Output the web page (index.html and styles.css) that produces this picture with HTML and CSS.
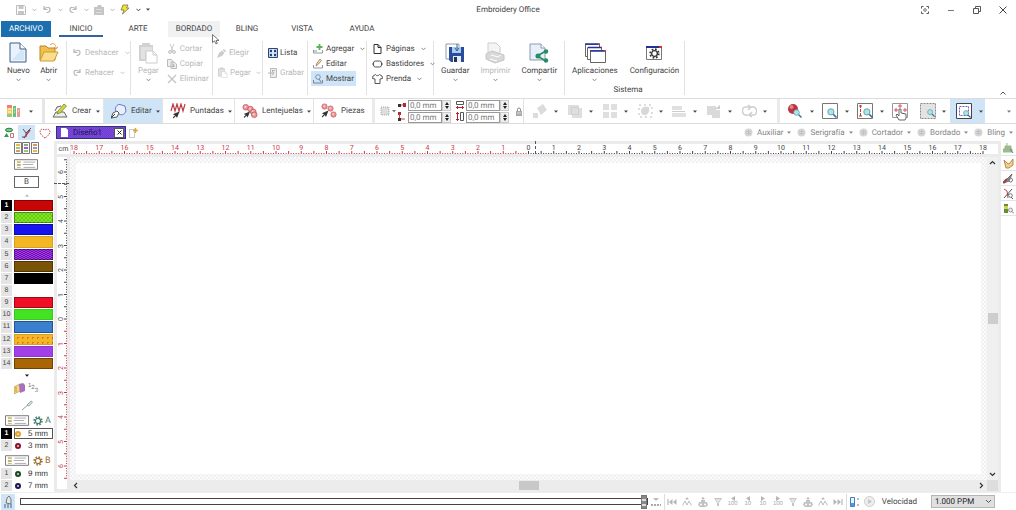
FILE: index.html
```html
<!DOCTYPE html>
<html lang="es">
<head>
<meta charset="utf-8">
<title>Embroidery Office</title>
<link rel="stylesheet" href="styles.css">
</head>
<body>
<svg class="sprite" aria-hidden="true">
  <symbol id="chev" viewBox="0 0 5 4"><path d="M.5 .8 2.5 2.8 4.5 .8" fill="none" stroke="currentColor"/></symbol>
  <symbol id="tri" viewBox="0 0 4 3"><path d="M0 .5H4L2 2.8Z" fill="currentColor"/></symbol>
  <symbol id="undo" viewBox="0 0 10 9"><path d="M2 1v3.500h3.500M2 4.500C4 1.500 8 1.500 8 4.500 8 6.500 6.500 7.500 4.500 7.500" fill="none" stroke="currentColor" stroke-width="1.200"/></symbol>
  <symbol id="redo" viewBox="0 0 10 9"><path d="M8 1v3.500H4.500M8 4.500C6 1.500 2 1.500 2 4.500 2 6.500 3.500 7.500 5.500 7.500" fill="none" stroke="currentColor" stroke-width="1.200"/></symbol>
  <symbol id="clip" viewBox="0 0 20 22"><path d="M1 3h14v16H1zM4 1h8v4H4z" fill="#d2d2d2"/><path d="M3 5v12h4V9h7V5z" fill="#e2e2e2"/><path d="M8 9h7l4 4v8H8z" fill="#fff" stroke="#ccc"/><path d="M15 9v4h4" fill="none" stroke="#ccc"/></symbol>
  <symbol id="lens" viewBox="0 0 9 9"><circle cx="3.500" cy="3.500" r="2.800" fill="#a9e6ea" stroke="#5f9aa4" stroke-width=".8"/><path d="m5.700 5.700 2.800 2.800" stroke="#356e9a" stroke-width="1.400"/></symbol>
  <symbol id="funnel" viewBox="0 0 10 10"><path d="M1 1h8L6 6v3H4V6z" fill="#c4c4c4"/><path d="M3 3h4M4 5h2" stroke="#fff"/></symbol>
  <symbol id="cluster" viewBox="0 0 10 10"><path d="M5 0v3" stroke="#c5c5c5"/><path d="M3 2h4L5 0zM3 3h4v2h2l1 3-2 2H2L0 8l1-3h2z" fill="#c2c2c2"/><circle cx="3" cy="7.500" r="1" fill="#fff"/><circle cx="7" cy="7.500" r="1" fill="#fff"/></symbol>
  <symbol id="loops" viewBox="0 0 10 10"><path d="M5 0 3 2.500h4z" fill="#bbb"/><path d="M.5 8.500 3 4l2 4 2-4 2.500 4.500" fill="none" stroke="#bbb"/></symbol>
  <symbol id="prev" viewBox="0 0 6 5"><path d="M5 0v5L1 2.500Z" fill="#b5b5b5"/></symbol>
  <symbol id="next" viewBox="0 0 6 5"><path d="M1 0v5L5 2.500Z" fill="#b5b5b5"/></symbol>
  <symbol id="card" viewBox="0 0 26 12"><path d="M.5.5h24v10H.5z" fill="#fff" stroke="#777"/><path d="M3 3h4" stroke="#e8b46a" stroke-width="2"/><path d="M3 6h4" stroke="#8fc48b" stroke-width="2"/><path d="M3 8.500h4" stroke="#e0a65c"/><path d="M10 3h12M9 5.500h11M10 8.500h12" stroke="#aaa"/></symbol>
  <symbol id="gear" viewBox="0 0 10 10"><circle cx="5" cy="5" r="2.600" fill="none" stroke="currentColor" stroke-width="1.200"/><circle cx="5" cy="5" r="3.900" fill="none" stroke="currentColor" stroke-width="1.600" stroke-dasharray="1.560 1.500"/></symbol>
  <symbol id="disk" viewBox="0 0 10 10"><path d="M.5.5h8l1 1v8h-9z" fill="#fff" stroke="#bcbcbc"/><path d="M2.500 1h5v3h-5zM2 6h6v3H2z" fill="#c6c6c6"/></symbol>
  <symbol id="ball" viewBox="0 0 9 9"><circle cx="4.500" cy="4.500" r="4" fill="#d6d6d6"/><path d="M2 3.500h5M2 5.500h5M4.500 2v5" stroke="#bbb" stroke-width=".7"/></symbol>
  <symbol id="bead" viewBox="0 0 8 8"><circle cx="4" cy="4" r="3" fill="#e99a9f" stroke="#c8525b" stroke-width=".8"/><circle cx="3.500" cy="3.500" r="1" fill="#f8d6d6"/></symbol>
  <symbol id="arrow" viewBox="0 0 8 8"><path d="M7.500.5 5 7 3.800 5 1.500 7.500.8 6.500 3 4.300.8 3.200Z" fill="#333"/></symbol>
</svg>

<header class="titlebar">
  <div class="quick">
    <button aria-label="Guardar"><svg width="10" height="10"><use href="#disk"/></svg></button><svg class="chev" width="5" height="4"><use href="#chev"/></svg>
    <button aria-label="Deshacer"><svg width="10" height="9"><use href="#undo"/></svg></button><svg class="chev" width="5" height="4"><use href="#chev"/></svg>
    <button aria-label="Rehacer"><svg width="10" height="9"><use href="#redo"/></svg></button><svg class="chev" width="5" height="4"><use href="#chev"/></svg>
    <button aria-label="Imagen"><svg width="10" height="10" viewBox="0 0 10 10"><path d="M0 2h3l1-2h3l1 2h2v8H0z" fill="#c5c5c5"/><path d="M2 4h6v4H2z" fill="#ddd"/><path d="M2 6h6" stroke="#aaa"/></svg></button><svg class="chev" width="5" height="4"><use href="#chev"/></svg>
    <button aria-label="Rápido"><svg width="10" height="11" viewBox="0 0 10 11"><path d="M3 1h5L6.500 4H9L2.500 10 4 6H1z" fill="#f4e23c" stroke="#7c7440" stroke-width=".8"/></svg></button><svg class="chev dark" width="5" height="4"><use href="#chev"/></svg>
    <svg class="dark" width="4" height="3"><use href="#tri"/></svg>
  </div>
  <h1>Embroidery Office</h1>
  <div class="window">
    <button aria-label="Enfocar"><svg width="8" height="8" viewBox="0 0 8 8"><path d="M.5 2.500v-2h2M5.500.5h2v2M7.500 5.500v2h-2M2.500 7.500h-2v-2" fill="none" stroke="#555"/><circle cx="4" cy="4" r="1.300" fill="none" stroke="#555" stroke-width=".8"/></svg></button>
    <button aria-label="Minimizar"><svg width="8" height="8" viewBox="0 0 8 8"><path d="M1 4.500h6" stroke="#777"/></svg></button>
    <button aria-label="Restaurar"><svg width="8" height="8" viewBox="0 0 8 8"><path d="M.5 2.500h5v5h-5zM2.500 2V.5h5v5H6" fill="none" stroke="#555"/></svg></button>
    <button aria-label="Cerrar"><svg width="8" height="8" viewBox="0 0 8 8"><path d="m.5.5 7 7M7.500.5l-7 7" stroke="#444"/></svg></button>
  </div>
</header>

<nav class="tabs">
  <button class="file">ARCHIVO</button>
  <button class="tab on">INICIO</button>
  <button class="tab arte">ARTE</button>
  <button class="tab hover">BORDADO<svg class="pointer" width="8" height="11" viewBox="0 0 8 11"><path d="M.5.5v8l2-1.600 1.400 3 1.400-.6-1.300-2.900H7z" fill="#fff" stroke="#555" stroke-width=".8"/></svg></button>
  <button class="tab bling">BLING</button>
  <button class="tab vista">VISTA</button>
  <button class="tab">AYUDA</button>
</nav>

<section class="ribbon">
  <div class="group g1">
    <button class="big"><svg width="20" height="22" viewBox="0 0 20 22"><path d="M2 1h10l6 6v13H2z" fill="#eaf3fd" stroke="#3d5f86"/><path d="M12 1v6h6" fill="#fff" stroke="#3d5f86"/><path d="M4 18 13 8l3 1v9z" fill="#d3e6f8"/></svg>Nuevo<svg width="5" height="4"><use href="#chev"/></svg></button>
    <button class="big"><svg width="20" height="22" viewBox="0 0 20 22"><path d="M1 4h6l2 2h7v12H1z" fill="#f0c04b" stroke="#b8872c"/><path d="m1 19 4-9h14l-4 9z" fill="#fbdd8b" stroke="#d19b38"/><path d="M11 3c3-3 6-1 6 3m-2-1 2 2 2-2" fill="none" stroke="#dba23b"/></svg>Abrir<svg width="5" height="4"><use href="#chev"/></svg></button>
  </div>
  <div class="group two off">
    <button class="row"><svg width="10" height="9"><use href="#undo"/></svg>Deshacer<svg class="end" width="5" height="4"><use href="#chev"/></svg></button>
    <button class="row"><svg width="10" height="9"><use href="#redo"/></svg>Rehacer<svg class="end" width="5" height="4"><use href="#chev"/></svg></button>
  </div>
  <div class="group paste off">
    <button class="big"><svg width="20" height="22"><use href="#clip"/></svg>Pegar<svg width="5" height="4"><use href="#chev"/></svg></button>
    <div class="stack">
      <button class="row"><svg width="10" height="10" viewBox="0 0 10 10"><path d="m3 0 3 7M7 0 4 7" stroke="#ccc"/><circle cx="3" cy="8" r="1.400" fill="none" stroke="#bbb"/><circle cx="7" cy="8" r="1.400" fill="none" stroke="#bbb"/></svg>Cortar</button>
      <button class="row"><svg width="10" height="10" viewBox="0 0 10 10"><path d="M.5.500h4l1.500 2v5H.500zM4 3h3l2.500 2v4.500H4z" fill="#eee" stroke="#bbb"/><path d="M5.500 6h2M5.500 7.500h2" stroke="#aaa"/></svg>Copiar</button>
      <button class="row"><svg width="10" height="10" viewBox="0 0 10 10"><path d="m1 1 8 8M9 1 1 9" stroke="#c4c4c4" stroke-width="1.300"/></svg>Eliminar</button>
    </div>
  </div>
  <div class="group two narrow off">
    <button class="row"><svg width="10" height="10" viewBox="0 0 10 10"><path d="m0 10 2-5 5-4 2 2-4 5z" fill="#ccc"/><path d="m5 2 3 3" stroke="#fff"/></svg>Elegir</button>
    <button class="row"><svg width="11" height="11"><use href="#clip"/></svg>Pegar<svg class="end" width="5" height="4"><use href="#chev"/></svg></button>
  </div>
  <div class="group two list">
    <button class="row"><svg width="10" height="10" viewBox="0 0 10 10"><path d="M.5.5h9v9h-9z" fill="#b9d0ec" stroke="#33466b"/><path d="M2 2h2v2H2zM6 2h2v2H6zM2 6h2v2H2zM6 6h2v2H6z" fill="#23407c"/><path d="M5 1v8" stroke="#fff"/></svg>Lista</button>
    <button class="row off"><svg width="10" height="10" viewBox="0 0 10 10"><path d="M2.500.5h6v9h-6z" fill="#eee" stroke="#bbb"/><path d="M0 5h6M4 3l2 2-2 2M4 2.500h3" fill="none" stroke="#b5b5b5"/></svg>Grabar</button>
  </div>
  <div class="group three">
    <button class="row"><svg width="10" height="10" viewBox="0 0 10 10"><path d="M.5 6v3h9V6M1 7h3" fill="none" stroke="#8f9aa6"/><path d="M6.500 0v6M3.500 3h6" stroke="#58b455" stroke-width="1.800"/></svg>Agregar<svg class="end" width="5" height="4"><use href="#chev"/></svg></button>
    <button class="row"><svg width="10" height="10" viewBox="0 0 10 10"><path d="M.5 6v3h9V6" fill="none" stroke="#8f9aa6"/><path d="m3 7 1-3 3-4 1.500 1.500L5.500 5z" fill="#f1ddb0" stroke="#9b7450" stroke-width=".8"/></svg>Editar</button>
    <button class="row sel"><svg width="10" height="10" viewBox="0 0 10 10"><path d="M.5 6v3h9V6" fill="none" stroke="#71869c"/><circle cx="5" cy="3" r="2.300" fill="#cfe8fb" stroke="#6b7b94" stroke-width=".8"/><path d="m6 5 2 3" stroke="#6b7b94"/></svg>Mostrar</button>
  </div>
  <div class="group three pages">
    <button class="row"><svg width="11" height="10" viewBox="0 0 11 10"><path d="M2 .5h4l3 3v6H2zM6 .5v3h3" fill="#fff" stroke="#333"/></svg>Páginas<svg class="end" width="5" height="4"><use href="#chev"/></svg></button>
    <button class="row"><svg width="11" height="10" viewBox="0 0 11 10"><rect x="1.500" y="2" width="8" height="6" rx="2" fill="#fff" stroke="#555"/><path d="M0 5h2M9 5h2" stroke="#555"/></svg>Bastidores<svg class="end" width="5" height="4"><use href="#chev"/></svg></button>
    <button class="row"><svg width="11" height="10" viewBox="0 0 11 10"><path d="M3.500.500 1 2l-.5 2.500L3 5v4.500h5V5l2.500-.5L10 2 7.500.500C7 2 4 2 3.500.500z" fill="#fff" stroke="#555"/></svg>Prenda<svg class="end" width="5" height="4"><use href="#chev"/></svg></button>
  </div>
  <div class="group share">
    <button class="big"><svg width="20" height="22" viewBox="0 0 20 22"><path d="M1 2h13v15H1z" fill="#fff" stroke="#8d9cb0"/><path d="M4 5h15v15H6l-2-2z" fill="#294c9c"/><path d="M7 5h9v6H7z" fill="#a9cdf0"/><path d="M8 14h8v6H8z" fill="#e8eef6"/><path d="M9 15h3v5H9z" fill="#20325f"/><path d="M12 2v6M10 6l2 3 2-3" fill="none" stroke="#39639c"/></svg>Guardar<svg width="5" height="4"><use href="#chev"/></svg></button>
    <button class="big off"><svg width="20" height="22" viewBox="0 0 20 22"><path d="M3 1h8l4 4v8H3z" fill="#f4f4f4" stroke="#ccc"/><path d="m1 12 6-3 12 4v5l-9 3-9-4z" fill="#d8d8d8" stroke="#c4c4c4"/><path d="m6 13 7 2 3-2M5 17l7 2" fill="none" stroke="#fff"/></svg>Imprimir<svg width="5" height="4"><use href="#chev"/></svg></button>
    <button class="big"><svg width="20" height="22" viewBox="0 0 20 22"><path d="M1 2h11l4 4v12H1z" fill="#e6effa" stroke="#8b9aad"/><path d="M12 2v4h4" fill="#fff" stroke="#8b9aad"/><path d="M17 9 8 14l9 5" fill="none" stroke="#278c61" stroke-width="1.600"/><circle cx="17" cy="9.500" r="2.200" fill="#278c61"/><circle cx="9" cy="14" r="2.500" fill="#278c61"/><circle cx="17" cy="18.500" r="2.200" fill="#278c61"/></svg>Compartir<svg width="5" height="4"><use href="#chev"/></svg></button>
  </div>
  <div class="group system">
    <div class="pair">
      <button class="big"><svg width="22" height="22" viewBox="0 0 22 22"><g fill="#fff" stroke="#666"><path d="M1.500 2.500h14v12h-14z"/><path d="M3.500 5.500h14v12h-14z"/><path d="M6.500 8.500h15v12h-15z"/></g><path d="M1 2h13M4 5.500h13M6 9h14" stroke="#23309c" stroke-width="1.700"/><path d="M14 2h2M17 5.500h1M20 9h2" stroke="#b33" stroke-width="1.700"/></svg>Aplicaciones<svg width="5" height="4"><use href="#chev"/></svg></button>
      <button class="big"><svg width="20" height="22" viewBox="0 0 20 22"><path d="M2.500 4.500h15v13h-15z" fill="#fff" stroke="#777"/><path d="M2 5h13" stroke="#23309c" stroke-width="2"/><path d="M15 5h3" stroke="#c33" stroke-width="2"/><g color="#333"><use href="#gear" x="5" y="6" width="11" height="11"/></g></svg>Configuración</button>
    </div>
    <p>Sistema</p>
  </div>
  <button class="fold" aria-label="Contraer cinta"><svg width="6" height="4" viewBox="0 0 6 4"><path d="m.5 3.500 2.500-2.500 2.500 2.500" fill="none" stroke="#555"/></svg></button>
</section>

<section class="tools">
  <button class="mode pal" aria-label="Paleta"><svg width="14" height="14" viewBox="0 0 14 14"><path d="M0 1h5v12H0z" fill="#f6c65b"/><path d="M0 1h5v3H0z" fill="#ee7f72"/><path d="M0 10h5v3H0z" fill="#8fc985"/><path d="M6 2h3v11H6z" fill="#6ac173"/><path d="M10 4h3v9h-3z" fill="#e99b93"/><path d="M1 5h3M1 8h3M7 5h1M7 8h1M11 7h1" stroke="#fff"/></svg><svg width="4" height="3"><use href="#tri"/></svg></button>
  <button class="mode crear"><svg width="16" height="16" viewBox="0 0 16 16"><path d="M3 8 5 4l4-1M1 14l3-5h8l3 5z" fill="#e9f1e2" stroke="#666"/><path d="m5 11 1-3 6-7 2.500 2L8 10z" fill="#cbd944" stroke="#807d32" stroke-width=".8"/></svg><span>Crear</span><svg width="4" height="3"><use href="#tri"/></svg></button>
  <button class="mode editar"><svg width="16" height="16" viewBox="0 0 16 16"><path d="M5 9C3 5 6 1 9 1.500l5 1.500 1 5c-1 3-4 5-7 3" fill="#e8effc" stroke="#6b7cc4"/><path d="m0 15 2-5 4-2 2 2-2 4z" fill="#fff" stroke="#555"/><path d="m0 15 4-4" stroke="#333"/></svg><span>Editar</span><svg width="4" height="3"><use href="#tri"/></svg></button>
  <button class="mode punt"><svg width="16" height="16" viewBox="0 0 16 16"><path d="m1 8 2-7 2 7 2-7 2 7 2-7 2 7 2-7" fill="none" stroke="#c13b47" stroke-width="1.200"/><use href="#arrow" x="2" y="8" width="8" height="8"/></svg><span>Puntadas</span><svg width="4" height="3"><use href="#tri"/></svg></button>
  <button class="mode lent"><svg width="16" height="16" viewBox="0 0 17 16"><use href="#bead" x="0" y="0" width="8" height="8"/><use href="#bead" x="5" y="2" width="8" height="8"/><use href="#bead" x="8" y="5" width="8" height="8"/><use href="#bead" x="9" y="8" width="8" height="8"/><use href="#arrow" x="1" y="8" width="8" height="8"/></svg><span>Lentejuelas</span><svg width="4" height="3"><use href="#tri"/></svg></button>
  <button class="mode piez"><svg width="16" height="16" viewBox="0 0 16 16"><use href="#bead" x="0" y="0" width="7" height="7"/><use href="#bead" x="6" y="2" width="7" height="7"/><use href="#bead" x="9" y="8" width="7" height="7"/><use href="#arrow" x="0" y="7" width="8" height="8"/></svg><span>Piezas</span></button>
  <div class="coords">
    <svg class="anchor" width="16" height="12" viewBox="0 0 16 12"><path d="M1 2h8v8H1z" fill="#ddd" stroke="#aaa" stroke-dasharray="1 1"/><path d="M12 5h4l-2 2.500z" fill="#777"/></svg>
    <svg width="8" height="22" viewBox="0 0 8 22"><path d="M1 5h6" stroke="#c44"/><path d="M0 4h3v3H0z" fill="#333"/><path d="M5 3h3v4H5zM0 12h3v3H0z" fill="#b02832"/><path d="M1.500 14v5M2 19h5" stroke="#c44"/><path d="M0 18h3v3H0z" fill="#333"/></svg>
    <div class="fields">
      <div class="num"><input aria-label="Posición X" value="0,0 mm"><span><i></i><i></i></span></div>
      <div class="num"><input aria-label="Posición Y" value="0,0 mm"><span><i></i><i></i></span></div>
    </div>
    <svg class="size" width="8" height="22" viewBox="0 0 8 22"><path d="M.5 1.500h7v3h-7z" fill="#fff" stroke="#555"/><path d="M0 7.500h8M2 6 .5 7.500 2 9M6 6l1.500 1.500L6 9" fill="none" stroke="#b02832"/><path d="M4.500 12.500h3v8h-3z" fill="#fff" stroke="#555"/><path d="M1.500 12v9M0 14l1.500-1.500L3 14M0 19l1.500 1.500L3 19" fill="none" stroke="#b02832"/></svg>
    <div class="fields">
      <div class="num"><input aria-label="Ancho" value="0,0 mm"><span><i></i><i></i></span></div>
      <div class="num"><input aria-label="Alto" value="0,0 mm"><span><i></i><i></i></span></div>
    </div>
    <svg class="lock" width="6" height="9" viewBox="0 0 6 9"><path d="M1.500 4V2.500a1.500 1.500 0 0 1 3 0V4" fill="none" stroke="#888"/><path d="M0 4h6v5H0z" fill="#aaa"/><path d="M1 6h4" stroke="#ddd"/></svg>
  </div>
  <div class="ghost">
    <button aria-label="Girar"><svg width="15" height="14" viewBox="0 0 15 14"><path d="m4 4 6-4 4 6-6 5zM0 9h5v5H0z" fill="#dcdcdc"/></svg><svg width="4" height="3"><use href="#tri"/></svg></button>
    <button aria-label="Orden"><svg width="15" height="14" viewBox="0 0 15 14"><path d="M0 1h11v10H0zM4 4h10v10H4z" fill="#dedede"/><path d="M3.500 3.500h7v7h-7z" fill="none" stroke="#c5c5c5" stroke-dasharray="1 1"/></svg><svg width="4" height="3"><use href="#tri"/></svg></button>
    <button aria-label="Matriz"><svg width="15" height="14" viewBox="0 0 15 14"><path d="M0 0h6v6H0zM8 0h6v6H8zM0 8h6v6H0zM8 8h6v6H8z" fill="#dfdfdf"/></svg><svg width="4" height="3"><use href="#tri"/></svg></button>
    <button aria-label="Escalar"><svg width="15" height="14" viewBox="0 0 15 14"><path d="M3 7c0-4 4-5 8-4 1 4-1 9-5 8-2 0-3-2-3-4z" fill="#d8d8d8"/><path d="M1 1h13v12H1z" fill="none" stroke="#bbb" stroke-dasharray="2 3"/></svg><svg width="4" height="3"><use href="#tri"/></svg></button>
    <button aria-label="Alinear"><svg width="15" height="14" viewBox="0 0 15 14"><path d="M0 2h10v4H0zM0 9h14v4H0z" fill="#e0e0e0"/><path d="M0 7.500h13" stroke="#ccc"/></svg><svg width="4" height="3"><use href="#tri"/></svg></button>
    <button aria-label="Combinar"><svg width="15" height="14" viewBox="0 0 15 14"><path d="M0 2h9v9H0zM5 6h8v8H5z" fill="#dadada"/><path d="m8 5 5-4v4z" fill="#ccc"/></svg><svg width="4" height="3"><use href="#tri"/></svg></button>
    <button aria-label="Ciclo"><svg width="15" height="14" viewBox="0 0 15 14"><path d="M6 11C-1 13-1 2 4 3h4M6 1l3 2-3 3M9 3c7-2 7 9 2 8H8m2-3-3 3 3 2" fill="none" stroke="#cfcfcf" stroke-width="1.500"/></svg><svg width="4" height="3"><use href="#tri"/></svg></button>
  </div>
  <div class="views">
    <button aria-label="Zoom"><svg width="16" height="16" viewBox="0 0 16 16"><circle cx="6" cy="6" r="5" fill="#bd3440"/><circle cx="4.500" cy="4" r="2" fill="#df8588"/><use href="#lens" x="6" y="6" width="9" height="9"/></svg><svg width="4" height="3"><use href="#tri"/></svg></button>
    <button aria-label="Zoom al diseño"><svg width="16" height="16" viewBox="0 0 16 16"><path d="M.5.5h15v15H.5z" fill="#fff" stroke="#777"/><use href="#lens" x="5" y="5" width="10" height="10"/></svg><svg width="4" height="3"><use href="#tri"/></svg></button>
    <button aria-label="Zoom de altura"><svg width="16" height="16" viewBox="0 0 16 16"><path d="M.5.5h15v15H.5z" fill="#fff" stroke="#777"/><path d="M3.500 2v12M2 3h3M2 13h3" stroke="#c33" stroke-dasharray="3 1"/><use href="#lens" x="6" y="5" width="10" height="10"/></svg><svg width="4" height="3"><use href="#tri"/></svg></button>
    <button class="plain" aria-label="Desplazar"><svg width="16" height="20" viewBox="0 0 16 20"><path d="M.5 2.500h15v14H.5z" fill="#fff" stroke="#999"/><path d="M4 7v4M2 9h4M8 3v4M6 5h4M13 7v4M11 9h4" stroke="#d05560"/><path d="M7 19 4 14l1-1 2 2V8h2v4l5 1v4l-1 2z" fill="#fff" stroke="#555" stroke-width=".9"/></svg></button>
    <button class="short" aria-label="Zoom a página"><svg width="16" height="16" viewBox="0 0 16 16"><path d="M.5.5h15v15H.5z" fill="#e3e3e3" stroke="#888" stroke-dasharray="2 1"/><use href="#lens" x="7" y="6" width="8" height="8"/></svg><svg width="4" height="3"><use href="#tri"/></svg></button>
    <button class="sel" aria-label="Zoom a bastidor"><svg width="16" height="16" viewBox="0 0 16 16"><path d="M.5.5h15v15H.5z" fill="#fff" stroke="#444"/><path d="M3.500 3.500h9v9h-9z" fill="none" stroke="#6b5fd0" stroke-dasharray="2 1"/><use href="#lens" x="7" y="7" width="8" height="8"/></svg><svg width="4" height="3"><use href="#tri"/></svg></button>
  </div>
  <svg class="more" width="4" height="3"><use href="#tri"/></svg>
</section>

<section class="docs">
  <div class="panels">
    <button aria-label="Objetos"><svg width="12" height="12" viewBox="0 0 12 12"><ellipse cx="6" cy="3" rx="3.500" ry="1.800" fill="#79c98b" stroke="#218244"/><path d="m1 10 2.500-4L6 10z" fill="#2a9b5b"/><path d="M7.500 6.500h3v4h-3z" fill="#fff" stroke="#c9707a"/></svg></button>
    <button class="sel" aria-label="Hilos"><svg width="12" height="12" viewBox="0 0 12 12"><path d="m2 2 3 4v4M5 6l5-5M1 10h2" fill="none" stroke="#555"/><path d="m3 11 6-8" stroke="#a83c46" stroke-width="1.300"/></svg></button>
    <button aria-label="Favoritos"><svg width="12" height="12" viewBox="0 0 12 12"><path d="M6 11C-2 6 1 0 6 3c5-3 8 3 0 8z" fill="#fff" stroke="#b8444e" stroke-dasharray="1.500 1"/></svg></button>
  </div>
  <div class="doc"><svg width="7" height="9" viewBox="0 0 7 9"><path d="M0 0h5l2 2v7H0z" fill="#fff"/></svg><span>Diseño1</span><button aria-label="Cerrar diseño"><svg width="5" height="5" viewBox="0 0 5 5"><path d="m.5.5 4 4M4.500.5l-4 4" stroke="#222"/></svg></button></div>
  <button class="newdoc" aria-label="Nuevo diseño"><svg width="9" height="10" viewBox="0 0 9 10"><path d="M.5 1.500h5v8h-5z" fill="#fff" stroke="#999" stroke-dasharray="1 1"/><path d="M6.500 0v5M4 2.500h5" stroke="#dca83c" stroke-width="1.500"/></svg></button>
  <div class="machines">
    <button><svg width="9" height="9"><use href="#ball"/></svg>Auxiliar<svg width="4" height="3"><use href="#tri"/></svg></button>
    <button><svg width="9" height="9"><use href="#ball"/></svg>Serigrafía<svg width="4" height="3"><use href="#tri"/></svg></button>
    <button><svg width="9" height="9"><use href="#ball"/></svg>Cortador<svg width="4" height="3"><use href="#tri"/></svg></button>
    <button><svg width="9" height="9"><use href="#ball"/></svg>Bordado<svg width="4" height="3"><use href="#tri"/></svg></button>
    <button><svg width="9" height="9"><use href="#ball"/></svg>Bling<svg width="4" height="3"><use href="#tri"/></svg></button>
  </div>
</section>

<main class="work">
  <aside class="threads">
    <button class="box" aria-label="Paletas"><svg width="25" height="12" viewBox="0 0 25 12"><g fill="#fff" stroke="#777"><path d="M.5.5h7v11h-7zM8.500.5h7v11h-7zM17.500.5h7v11h-7z"/></g><path d="M2 3h4M19 9h4" stroke="#f0b34f" stroke-width="2"/><path d="M2 6h4M10 9h4" stroke="#98ca72" stroke-width="2"/><path d="M2 9h4M19 3h4" stroke="#d09a6c" stroke-width="2"/><path d="M10 3h4M19 6h4" stroke="#9ba08c" stroke-width="2"/><path d="M10 6h4" stroke="#9a5cdb" stroke-width="2"/></svg></button>
    <button class="box" aria-label="Tarjeta"><svg width="25" height="12"><use href="#card"/></svg></button>
    <button class="box letter">B</button>
    <svg class="up" width="4" height="3" viewBox="0 0 4 3"><path d="M0 2.500h4L2 .5z" fill="#aaa"/></svg>
    <ol class="swatches">
      <li class="cur"><b>1</b><button class="c1" aria-label="Rojo"></button></li>
      <li><b>2</b><button class="c2" aria-label="Verde moteado"></button></li>
      <li><b>3</b><button class="c3" aria-label="Azul"></button></li>
      <li><b>4</b><button class="c4" aria-label="Amarillo"></button></li>
      <li><b>5</b><button class="c5" aria-label="Morado"></button></li>
      <li><b>6</b><button class="c6" aria-label="Marrón"></button></li>
      <li><b>7</b><button class="c7" aria-label="Negro"></button></li>
      <li><b>8</b><button class="c8" aria-label="Blanco"></button></li>
      <li><b>9</b><button class="c9" aria-label="Carmesí"></button></li>
      <li><b>10</b><button class="c10" aria-label="Verde"></button></li>
      <li><b>11</b><button class="c11" aria-label="Celeste"></button></li>
      <li><b>12</b><button class="c12" aria-label="Ámbar"></button></li>
      <li><b>13</b><button class="c13" aria-label="Violeta"></button></li>
      <li><b>14</b><button class="c14" aria-label="Ocre"></button></li>
    </ol>
    <svg class="down" width="4" height="3"><use href="#tri"/></svg>
    <button class="spool"><svg width="11" height="11" viewBox="0 0 11 11"><path d="m0 4 6-3v7l-6 3z" fill="#efdf79" stroke="#b79b52" stroke-width=".8"/><path d="m5 1 4-1 2 2v6l-5 2z" fill="#ab6fc0"/><path d="M2 4v5" stroke="#e57a4f"/></svg><span class="n1">1</span><span class="n2">2</span><span class="n3">3</span></button>
    <button class="needle" aria-label="Aguja"><svg width="12" height="11" viewBox="0 0 12 11"><path d="m1 10 7-6" stroke="#999"/><path d="m6 5 4-4 1.500 1L8 6z" fill="#d5e5dd" stroke="#8a9a94" stroke-width=".8"/></svg></button>
    <div class="head a"><svg width="25" height="12"><use href="#card"/></svg><svg width="10" height="10"><use href="#gear"/></svg><span>A</span></div>
    <ol class="beads">
      <li class="cur"><b>1</b><span><i class="gold"></i>5 mm</span></li>
      <li><b>2</b><span><i class="red"></i>3 mm</span></li>
    </ol>
    <div class="head b"><svg width="25" height="12"><use href="#card"/></svg><svg width="10" height="10"><use href="#gear"/></svg><span>B</span></div>
    <ol class="beads">
      <li><b>1</b><span><i class="green"></i>9 mm</span></li>
      <li><b>2</b><span><i class="navy"></i>7 mm</span></li>
    </ol>
  </aside>

  <div class="stage">
    <div class="unit">cm</div>
    <div class="hruler" id="hruler"><svg class="ticks"></svg><div class="labels"></div><i class="mark"></i></div>
    <div class="vruler" id="vruler"><svg class="ticks"></svg><div class="labels"></div><i class="mark"></i></div>
    <div class="canvas"><div class="page"></div></div>
    <div class="vscroll">
      <svg width="7" height="5" viewBox="0 0 7 5"><path d="m1 4 2.500-2.500L6 4" fill="none" stroke="#333" stroke-width="1.200"/></svg>
      <span></span>
      <svg width="7" height="5" viewBox="0 0 7 5"><path d="m1 1 2.500 2.500L6 1" fill="none" stroke="#333" stroke-width="1.200"/></svg>
    </div>
    <div class="hscroll">
      <svg width="5" height="7" viewBox="0 0 5 7"><path d="M4 1 1.500 3.500 4 6" fill="none" stroke="#333" stroke-width="1.200"/></svg>
      <span></span>
      <svg width="5" height="7" viewBox="0 0 5 7"><path d="m1 1 2.500 2.500L1 6" fill="none" stroke="#333" stroke-width="1.200"/></svg>
    </div>
    <div class="corner"></div>
  </div>

  <aside class="side">
    <button aria-label="Ver objetos"><svg width="11" height="11" viewBox="0 0 11 11"><path d="M0 6h9v3H0zM2 3h6v3H2zM4 0v4" fill="#9dbb93" stroke="#9bb98f"/><path d="m7 6 3 4" stroke="#777"/></svg></button>
    <button aria-label="Ver formas"><svg width="11" height="11" viewBox="0 0 11 11"><path d="m1 2 3 3 2 1 4-5v6L6 10H3z" fill="#f1cf8a" stroke="#bb8947"/></svg></button>
    <button aria-label="Ver pincel"><svg width="11" height="11" viewBox="0 0 11 11"><path d="m1 10 3-4 5-5-3 7z" fill="#999" stroke="#555" stroke-width=".8"/><path d="m0 10 4-4" stroke="#a23c58" stroke-width="2"/><circle cx="7.500" cy="7" r="2" fill="none" stroke="#777"/></svg></button>
    <button aria-label="Ver puntadas"><svg width="11" height="11" viewBox="0 0 11 11"><path d="m1 1 3 2 1 7" fill="none" stroke="#c8404e"/><path d="M1 10 9 1M5 6l5 5" stroke="#555"/><circle cx="7.500" cy="7.500" r="1.800" fill="#fff" stroke="#777"/></svg></button>
    <button aria-label="Ver hilos"><svg width="11" height="11" viewBox="0 0 11 11"><path d="M1 1h4v9H1z" fill="#5f8f3c"/><path d="M1 3h4v3H1z" fill="#d6d14b"/><circle cx="7.500" cy="7" r="2" fill="#e8eeee" stroke="#999"/><path d="m9 8.500 2 2" stroke="#777"/></svg></button>
  </aside>
</main>

<footer class="player">
  <button class="sel" aria-label="Dibujar"><svg width="11" height="13" viewBox="0 0 11 13"><path d="m3 8 1-5 2-2 2 3v5z" fill="#e4e7ea" stroke="#777"/><path d="M1 10h9M1 12h9" stroke="#3c6682" stroke-dasharray="2 1"/></svg></button>
  <input class="seek" type="range" min="0" max="100" value="100" aria-label="Progreso">
  <button class="fit" aria-label="Ajustar"><svg width="10" height="10" viewBox="0 0 10 10"><path d="M2 1h6L5 4z" fill="#bbb"/><path d="M0 8h10" stroke="#aaa" stroke-width="2" stroke-dasharray="2 1"/></svg></button>
  <div class="steps">
    <button aria-label="Inicio"><svg width="10" height="8" viewBox="0 0 10 8"><path d="M1 1v6" stroke="#aaa"/><path d="M5.500 1v6L2 4zM9.500 1v6L6 4z" fill="#b5b5b5"/></svg></button>
    <button aria-label="Bucle anterior"><svg width="10" height="10"><use href="#loops"/></svg></button>
    <button aria-label="Color anterior"><svg width="10" height="10"><use href="#cluster"/></svg></button>
    <button aria-label="Filtro anterior"><svg width="10" height="10"><use href="#funnel"/></svg></button>
    <button><svg width="6" height="5"><use href="#prev"/></svg>100</button>
    <button><svg width="6" height="5"><use href="#prev"/></svg>10</button>
    <button><svg width="6" height="5"><use href="#next"/></svg>10</button>
    <button><svg width="6" height="5"><use href="#next"/></svg>100</button>
    <button aria-label="Filtro siguiente"><svg width="10" height="10"><use href="#funnel"/></svg></button>
    <button aria-label="Color siguiente"><svg width="10" height="10"><use href="#cluster"/></svg></button>
    <button aria-label="Bucle siguiente"><svg width="10" height="10"><use href="#loops"/></svg></button>
    <button aria-label="Fin"><svg width="10" height="8" viewBox="0 0 10 8"><path d="M9 1v6" stroke="#aaa"/><path d="M.5 1v6L4 4zM4.500 1v6L8 4z" fill="#b5b5b5"/></svg></button>
  </div>
  <button class="pace" aria-label="Ritmo"><svg width="9" height="10" viewBox="0 0 9 10"><path d="M.5.5h4v9h-4z" fill="#e9f4ff" stroke="#3d82bd"/><path d="M1 6h3v3H1z" fill="#4c9bdc"/><path d="M7 2h2M7 8h2" stroke="#777"/></svg></button>
  <button class="play" aria-label="Reproducir"><svg width="11" height="11" viewBox="0 0 11 11"><circle cx="5.500" cy="5.500" r="5" fill="#eee" stroke="#ccc"/><path d="M4 3v5l4-2.500z" fill="#c4c4c4"/></svg></button>
  <label for="speed">Velocidad</label>
  <div class="pick"><select id="speed"><option>1.000 PPM</option></select><svg width="7" height="5" viewBox="0 0 7 5"><path d="m1 1 2.500 2.500L6 1" fill="none" stroke="#555"/></svg></div>
</footer>
<script src="rulers.js"></script>
</body>
</html>
```
FILE: styles.css
```css
* { box-sizing: border-box; }
body {
  margin: 0;
  height: 100vh;
  display: flex;
  flex-direction: column;
  overflow: hidden;
  background: #fff;
  color: #444;
  font: 8px/12px Roboto, "Open Sans", sans-serif;
  text-rendering: geometricPrecision;
}
button {
  display: flex;
  align-items: center;
  margin: 0;
  padding: 0;
  border: 0;
  background: none;
  color: inherit;
  font: inherit;
  text-rendering: inherit;
  white-space: nowrap;
}
input, select { text-rendering: inherit; }
svg { display: block; flex: none; }
ol { list-style: none; margin: 0; padding: 0; }
.sprite { position: absolute; width: 0; height: 0; }
.sel { background: #cfe4f6; }
.off { color: #b8b8b8; }

/* Title bar */
.titlebar { display: grid; grid-template-columns: 1fr auto 1fr; align-items: center; height: 19px; }
.quick { display: flex; align-items: center; gap: 6px; padding-left: 16px; color: #b5b5b5; }
.quick .chev { margin-right: -1px; }
.quick .dark { color: #444; }
h1 { margin: 0; font-size: 8px; font-weight: 400; }
.window { display: flex; justify-content: flex-end; gap: 18px; padding-right: 9px; }

/* Ribbon tabs */
.tabs { display: flex; height: 20px; padding: 2px 0 2px 1px; }
.tabs button { justify-content: center; }
.file { width: 50px; margin-right: 8px; background: #1c6fae; color: #fff; }
.tab { width: 44px; margin-right: 10px; }
.tab.on { border-bottom: 2px solid #2f639b; padding-top: 2px; }
.tab.arte { width: 50px; margin-right: 5px; }
.tab.hover { width: 52px; margin-right: 5px; background: #f1f1f4; position: relative; }
.pointer { position: absolute; left: 44px; top: 13px; }
.tab.bling { margin-right: 11px; }
.tab.vista { margin-right: 16px; }

/* Ribbon */
.ribbon { display: flex; height: 60px; padding: 2px 0 3px; border-bottom: 1px solid #dcdcdc; }
.group { display: flex; border-right: 1px solid #e2e2e2; }
.big { flex-direction: column; justify-content: flex-start; padding-top: 1px; line-height: 12px; }
.big svg:first-child { margin-bottom: 1px; }
.big svg:last-child:not(:first-child) { margin-top: 1px; color: #888; }
.row { height: 15px; gap: 3px; line-height: 15px; }
.end { margin-left: 3px; color: #888; }
.off .end, .off.big svg { color: #c5c5c5; }
.g1 { width: 67px; padding-left: 7px; gap: 9px; }
.two { width: 64px; flex-direction: column; gap: 5px; padding: 4px 0 0 5px; }
.paste { width: 82px; padding-left: 7px; gap: 8px; }
.stack { display: flex; flex-direction: column; }
.narrow { width: 50px; padding-left: 4px; }
.narrow .row, .list .row { gap: 2px; }
.list { width: 45px; padding-left: 5px; }
.three { width: 59px; flex-direction: column; padding-left: 3px; }
.three .row { padding-left: 2px; }
.three .sel { width: 45px; }
.pages { width: 67px; }
.share { width: 131px; padding-left: 7px; gap: 11px; }
.system { flex-direction: column; width: 120px; padding-left: 7px; }
.pair { display: flex; flex: 1; gap: 12px; }
.system p { margin: 0; text-align: center; line-height: 10px; }
.fold { margin: auto 10px 0 auto; }

/* Tool row */
.tools { display: flex; align-items: stretch; height: 25px; border-bottom: 1px solid #dcdcdc; }
.mode { border-right: 1px solid #e4e4e4; padding-left: 7px; gap: 4px; }
.mode > svg:last-child:not(:first-child) { margin: 0 3px 0 auto; }
.pal { width: 45px; border-right: 3px solid #e6e6e6; }
.pal > svg:last-child:not(:first-child) { margin-right: 9px; }
.crear { width: 59px; }
.editar { width: 59px; background: #cfe4f6; }
.punt { width: 72px; }
.lent { width: 79px; }
.piez { width: 61px; border-right: 3px solid #eaeaea; }
.coords { display: flex; align-items: center; width: 149px; padding-left: 5px; border-right: 1px solid #e2e2e2; }
.anchor { margin-right: 2px; }
.fields { display: flex; flex-direction: column; gap: 1px; margin-left: 2px; }
.num { display: flex; height: 11px; }
.num input { width: 34px; height: 11px; padding: 0 1px; border: 1px solid #999; background: #fff; color: #777; font: 8px/9px Roboto, sans-serif; }
.num span { display: flex; flex-direction: column; justify-content: space-evenly; align-items: center; width: 9px; border: 1px solid #ccc; background: #eee; }
.num i { border: 2px solid transparent; border-top: 0; border-bottom: 3px solid #222; }
.num i:last-child { border-bottom: 0; border-top: 3px solid #222; }
.size { margin-left: 5px; }
.lock { margin-left: 7px; }
.ghost { display: flex; width: 256px; padding-left: 9px; border-right: 3px solid #eaeaea; }
.ghost button { width: 35px; gap: 6px; }
.views { display: flex; padding-left: 6px; }
.views button { width: 35px; padding-left: 1px; gap: 7px; }
.views .plain { width: 28px; }
.views .short { width: 31px; gap: 6px; }
.views .sel { padding-left: 6px; }
.more { margin: auto 5px auto auto; color: #777; }

/* Document tabs */
.docs { display: flex; align-items: center; height: 17px; }
.panels { display: flex; width: 56px; gap: 1px; }
.panels button { width: 17px; height: 15px; justify-content: center; }
.doc { display: flex; align-items: center; width: 70px; height: 13px; padding: 0 1px 0 4px; border: 1px solid #33307e; background: repeating-conic-gradient(#5547d6 0 25%, #9640d8 0 50%) 0 0 / 2px 2px; color: #1b1749; }
.doc span { flex: 1; padding-left: 5px; }
.doc button { width: 10px; height: 10px; justify-content: center; border: 1px solid #555; background: #fff; }
.newdoc { margin-left: 3px; }
.machines { display: flex; gap: 6px; margin: 0 3px 0 auto; color: #858585; }
.machines button { gap: 4px; }

/* Thread panel */
.work { flex: 1; display: grid; grid-template-columns: 54px 1fr 15px; min-height: 0; }
.threads { display: flex; flex-direction: column; padding: 1px 1px 0; background: #fff; }
.box { margin: 0 0 5px 13px; }
.letter { width: 25px; height: 12px; justify-content: center; border: 1px solid #666; line-height: 10px; }
.up { margin: 1px 0 3px 24px; }
.down { margin: 4px 0 6px 24px; color: #111; }
.swatches { display: grid; grid-auto-rows: 1fr; height: 170px; }
.swatches li, .beads li { display: flex; }
b { width: 11px; margin-right: 2px; background: #e4e4e4; color: #444; font: 400 7px/11px "Liberation Sans", sans-serif; text-align: center; }
.swatches b { margin-bottom: 1px; }
.cur b { background: #000; color: #fff; font-weight: 700; }
.swatches button { flex: 1; margin-bottom: 1px; border: 1px solid rgb(0 0 0 / 35%); }
.c1 { background: #c90606; }
.c2 { background: repeating-conic-gradient(#3fe01d 0 25%, #a9d01f 0 50%) 0 0 / 4px 4px; }
.c3 { background: #1713f0; }
.c4 { background: #f3b726; }
.c5 { background: repeating-conic-gradient(#6d0bb5 0 25%, #a33fe0 0 50%) 0 0 / 4px 2px; }
.c6 { background: #7b5306; }
.c7 { background: #000; }
.swatches .c8 { background: #fff; border-color: #fff; }
.c9 { background: #f01025; }
.c10 { background: #44e321; }
.c11 { background: #3a80cf; }
.c12 { background: radial-gradient(#e8742a 1px, transparent 1px) 0 0 / 5px 5px #f3b726; }
.c13 { background: #a23fe8; }
.c14 { background: #a86606; }
.swatches .c4, .swatches .c10, .swatches .c12, .swatches .c13 { border-color: rgb(0 0 0 / 12%); }
.spool { align-items: flex-start; height: 14px; margin-left: 13px; color: #777; font: 6px/7px "Liberation Sans", sans-serif; }
.n1 { padding-left: 3px; }
.n2 { padding-top: 2px; }
.n3 { padding-top: 5px; }
.needle { margin: 3px 0 2px 20px; }
.head { display: flex; align-items: center; gap: 3px; height: 15px; padding-left: 4px; font-size: 9px; }
.head span { margin-left: -1px; }
.a { color: #437d6d; }
.b { margin-top: 1px; color: #9c7238; }
.beads li { height: 12px; padding-bottom: 1px; }
.beads li span { flex: 1; display: flex; align-items: center; gap: 7px; padding-left: 1px; color: #333; font: 8px/9px "Liberation Sans", sans-serif; }
.beads .cur span { border: 1px solid #555; padding-left: 0; }
.beads i { width: 6px; height: 6px; border: 2px solid; border-radius: 50%; background: #ddd; }
.gold { color: #e2a422; }
.red { color: #8e1024; }
.green { color: #17491f; }
.navy { color: #1b1a4c; }

/* Canvas and rulers */
.stage {
  display: grid;
  grid-template: 10px minmax(0, 1fr) 11px / 13px minmax(0, 1fr) 11px;
  padding: 3px 3px 1px 3px;
  background: #ebebeb;
  min-height: 0;
}
.unit { background: #fff; text-align: center; font-size: 7px; line-height: 10px; }
.hruler { grid-column: 2 / 4; position: relative; background: #fff; margin-left: 1px; }
.hruler .labels, .vruler .labels { display: flex; justify-content: space-between; font-size: 7px; line-height: 8px; }
.hruler .labels { margin: 0 8px 0 -4px; }
.hruler .labels span { width: 14px; text-align: center; }
.ticks { position: absolute; overflow: visible; }
.hruler .ticks { left: 3px; bottom: 0; width: calc(100% - 18px); height: 3px; }
.neg { color: #c8384a; }
.ticks line { stroke: currentColor; }
.mark { position: absolute; }
.hruler .mark { left: 50%; top: -3px; height: 13px; border-left: 1px dashed #555; }
.vruler { grid-row: 2 / 4; position: relative; margin: 3px 3px 2px 0; background: #fff; }
.vruler .labels { flex-direction: column; height: 316px; padding-top: 8px; }
.vruler .labels span { width: 8px; height: 14px; writing-mode: vertical-rl; transform: rotate(180deg); text-align: center; }
.vruler .ticks { top: 15px; right: 0; width: 3px; height: 294px; }
.vruler .mark { top: 26px; left: -3px; width: 15px; border-top: 1px dashed #555; }
.canvas { margin-top: 3px; padding: 6px; background: repeating-conic-gradient(#f1eff3 0 25%, #fbfbf9 0 50%) 0 0 / 4px 4px; }
.page { height: 100%; background: #fff; }
.vscroll { display: flex; flex-direction: column; align-items: center; justify-content: space-between; margin-top: 3px; padding: 3px 0; background: #f0f0f0; }
.vscroll span { width: 10px; height: 11px; background: #cdcdcd; }
.hscroll { display: flex; align-items: center; justify-content: space-between; padding: 0 3px; background: #ececec; }
.hscroll span { width: 20px; height: 9px; background: #c8c8c8; }
.corner { background: #ddd; }
.side { display: flex; flex-direction: column; }
.side button { height: 15px; justify-content: center; border-bottom: 1px solid #e4e4e4; }

/* Playback bar */
.player { display: flex; align-items: center; height: 18px; border-top: 1px solid #eee; }
.player .sel { width: 14px; height: 16px; margin: 0 5px 0 1px; justify-content: center; }
.seek { flex: 1; min-width: 0; height: 7px; margin: 0; appearance: none; border: 1px solid #444; background: #fff; }
.seek::-webkit-slider-thumb { appearance: none; width: 6px; height: 14px; border: 1px solid #777; background: repeating-linear-gradient(#888 0 3px, #ddd 3px 5px); }
.fit { width: 17px; height: 16px; justify-content: center; border-right: 1px solid #ddd; }
.steps { display: grid; grid-template-columns: repeat(12, 1fr); width: 182px; border-right: 1px solid #ddd; color: #aaa; font: 6px/6px "Liberation Sans", sans-serif; }
.steps button { flex-direction: column; justify-content: center; height: 16px; }
.pace { width: 15px; justify-content: center; }
.play { width: 16px; justify-content: center; margin-right: 4px; }
.pick { position: relative; margin: 0 21px 0 14px; }
.pick select { display: block; width: 64px; height: 13px; padding: 0 0 0 3px; appearance: none; border: 1px solid #b5b5b5; border-radius: 0; background: #e0e0e0; color: #222; font: 8px/11px Roboto, sans-serif; }
.pick svg { position: absolute; right: 3px; top: 4px; }
```
FILE: rulers.js
```js
function buildRuler(id, from, to, vertical) {
  const root = document.getElementById(id);
  const labels = root.querySelector('.labels');
  const ticks = root.querySelector('.ticks');
  const redSide = vertical ? 1 : -1;
  for (let n = from; n <= to; n++) {
    const s = document.createElement('span');
    s.textContent = Math.abs(n);
    if (n * redSide > 0) s.className = 'neg';
    labels.append(s);
  }
  const count = (to - from) * 10;
  const extra = vertical ? 5 : 0;
  for (let i = -extra; i <= count + extra; i++) {
    const p = (i / count) * 100 + '%';
    const start = i % 5 === 0 ? 0 : 2;
    const l = document.createElementNS('http://www.w3.org/2000/svg', 'line');
    const set = (k, v) => l.setAttribute(k, v);
    set(vertical ? 'y1' : 'x1', p);
    set(vertical ? 'y2' : 'x2', p);
    set(vertical ? 'x1' : 'y1', start);
    set(vertical ? 'x2' : 'y2', 3);
    if ((from + i / 10) * redSide > 0) set('class', 'neg');
    ticks.append(l);
  }
}
buildRuler('hruler', -18, 18, false);
buildRuler('vruler', -6, 6, true);
```
